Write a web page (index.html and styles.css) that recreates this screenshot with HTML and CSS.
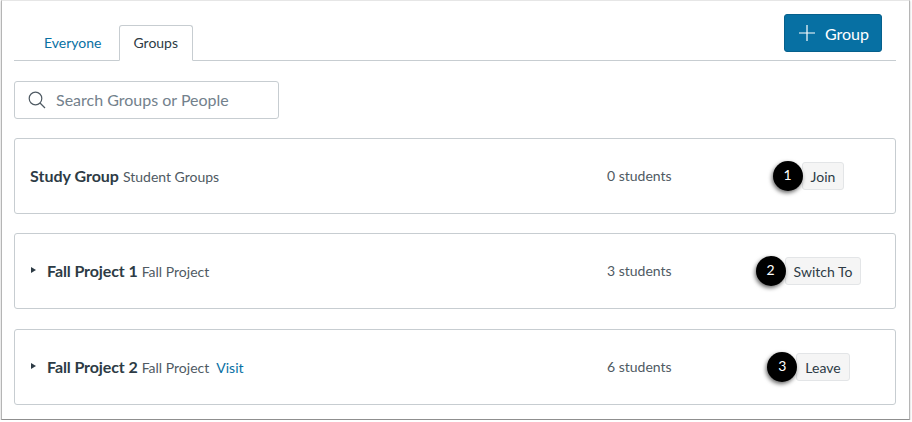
FILE: index.html
```html
<!DOCTYPE html>
<html lang="en">
<head>
<meta charset="UTF-8">
<meta name="viewport" content="width=device-width, initial-scale=1.0">
<title>Groups</title>
<link rel="stylesheet" href="styles.css">
</head>
<body>

<div class="window">

    <div class="tab-bar">
        <a class="tab" href="#">Everyone</a>
        <a class="tab tab-active" href="#">Groups</a>
        <button class="add-button">
            <svg class="add-icon" width="16" height="16" viewBox="0 0 16 16"><path d="M8 0V16M0 8H16" stroke="#fff" stroke-width="1.2" fill="none"/></svg>
            Group
        </button>
    </div>

    <div class="search-box">
        <svg class="search-icon" width="18" height="18" viewBox="0 0 18 18"><circle cx="7.5" cy="7.5" r="6.3" stroke="#4f5a63" stroke-width="1.2" fill="none"/><path d="M12 12L17 17" stroke="#4f5a63" stroke-width="1.2"/></svg>
        <span class="search-text">Search Groups or People</span>
    </div>

    <div class="group-card">
        <div class="group-name">
            <strong>Study Group</strong> <span class="group-set">Student Groups</span>
        </div>
        <div class="group-count">0 students</div>
        <div class="group-action">
            <div class="action-wrap">
                <span class="badge">1</span>
                <button class="action-button">Join</button>
            </div>
        </div>
    </div>

    <div class="group-card">
        <div class="group-name">
            <span class="arrow"></span>
            <strong>Fall Project 1</strong> <span class="group-set">Fall Project</span>
        </div>
        <div class="group-count">3 students</div>
        <div class="group-action">
            <div class="action-wrap">
                <span class="badge">2</span>
                <button class="action-button">Switch To</button>
            </div>
        </div>
    </div>

    <div class="group-card group-card-last">
        <div class="group-name">
            <span class="arrow"></span>
            <strong>Fall Project 2</strong> <span class="group-set">Fall Project</span>
            <a class="visit-link" href="#">Visit</a>
        </div>
        <div class="group-count">6 students</div>
        <div class="group-action">
            <div class="action-wrap">
                <span class="badge">3</span>
                <button class="action-button">Leave</button>
            </div>
        </div>
    </div>

</div>

</body>
</html>
```

FILE: styles.css
```css
* {
    box-sizing: border-box;
}

body {
    margin: 0;
    background-color: #ffffff;
    font-family: "Lato", "Liberation Sans", sans-serif;
    color: #2d3b45;
}

.window {
    width: 909px;
    height: 420px;
    margin-left: 1px;
    padding: 0 13px 0 12px;
    background-color: #ffffff;
    border-left: 1px solid #b5b5b5;
    border-right: 1px solid #b5b5b5;
    border-bottom: 1px solid #8f8f8f;
    border-top: 1px solid #e6e6e6;
    box-shadow: 0 1px 2px rgba(0, 0, 0, 0.25);
}

.tab-bar {
    display: flex;
    align-items: flex-end;
    height: 60px;
    padding-left: 15px;
    border-bottom: 1px solid #c7cdd1;
}

.tab {
    height: 36px;
    padding: 10px 15px 0;
    font-size: 14px;
    line-height: 17px;
    color: #0770a3;
    text-decoration: none;
}

.tab-active {
    height: 36px;
    margin-bottom: -1px;
    margin-left: 3px;
    padding: 8px 14px 0 13px;
    color: #2d3b45;
    background-color: #ffffff;
    border: 1px solid #c7cdd1;
    border-bottom: 1px solid #ffffff;
    border-radius: 3px 3px 0 0;
}

.add-button {
    display: flex;
    align-items: center;
    gap: 10px;
    height: 38px;
    margin-left: auto;
    margin-right: 14px;
    margin-bottom: 8px;
    padding: 0 12px 0 14px;
    font-family: inherit;
    font-size: 16px;
    color: #ffffff;
    background-color: #0770a3;
    border: 1px solid #06608c;
    border-radius: 3px;
}

.add-icon {
    flex: none;
}

.search-box {
    display: flex;
    align-items: center;
    width: 265px;
    height: 38px;
    margin-top: 20px;
    padding-left: 13px;
    background-color: #ffffff;
    border: 1px solid #c7cdd1;
    border-radius: 3px;
}

.search-icon {
    flex: none;
}

.search-text {
    margin-left: 10px;
    padding-bottom: 2px;
    font-size: 16px;
    color: #73818c;
}

.group-card {
    display: grid;
    grid-template-columns: 577px 144px 144px;
    align-items: center;
    width: 882px;
    height: 76px;
    margin-top: 19px;
    padding-left: 15px;
    border: 1px solid #c7cdd1;
    border-radius: 3px;
}

.group-card-last {
    margin-top: 20px;
}

.group-name {
    display: flex;
    align-items: baseline;
    padding-bottom: 2px;
    white-space: pre;
    font-size: 13px;
}

.group-name strong {
    font-size: 16px;
    font-weight: 700;
}

.arrow + strong {
    letter-spacing: -0.1px;
}

.group-set {
    margin-left: 4px;
    font-size: 14px;
    color: #4f5a63;
}

.arrow {
    align-self: center;
    width: 0;
    height: 0;
    margin-right: 11px;
    margin-left: 1px;
    border-top: 3.5px solid transparent;
    border-bottom: 3.5px solid transparent;
    border-left: 5px solid #2d3b45;
}

.visit-link {
    margin-left: 7px;
    font-size: 14px;
    color: #0770a3;
    text-decoration: none;
}

.group-count {
    padding-bottom: 2px;
    font-size: 14px;
    color: #4f5a63;
}

.group-action {
    display: flex;
    justify-content: center;
}

.action-wrap {
    position: relative;
}

.action-button {
    display: block;
    height: 28px;
    padding: 0 8px;
    font-family: inherit;
    font-size: 14px;
    color: #2d3b45;
    background-color: #f5f5f5;
    border: 1px solid #e3e5e7;
    border-radius: 3px;
}

.badge {
    position: absolute;
    top: -1px;
    left: -29px;
    width: 30px;
    height: 30px;
    font-size: 14px;
    line-height: 28px;
    text-align: center;
    color: #ffffff;
    background-color: #000000;
    border-radius: 50%;
    box-shadow: -1px 2px 4px rgba(0, 0, 0, 0.6), 0 0 0 1px rgba(255, 255, 255, 0.8);
}
```
